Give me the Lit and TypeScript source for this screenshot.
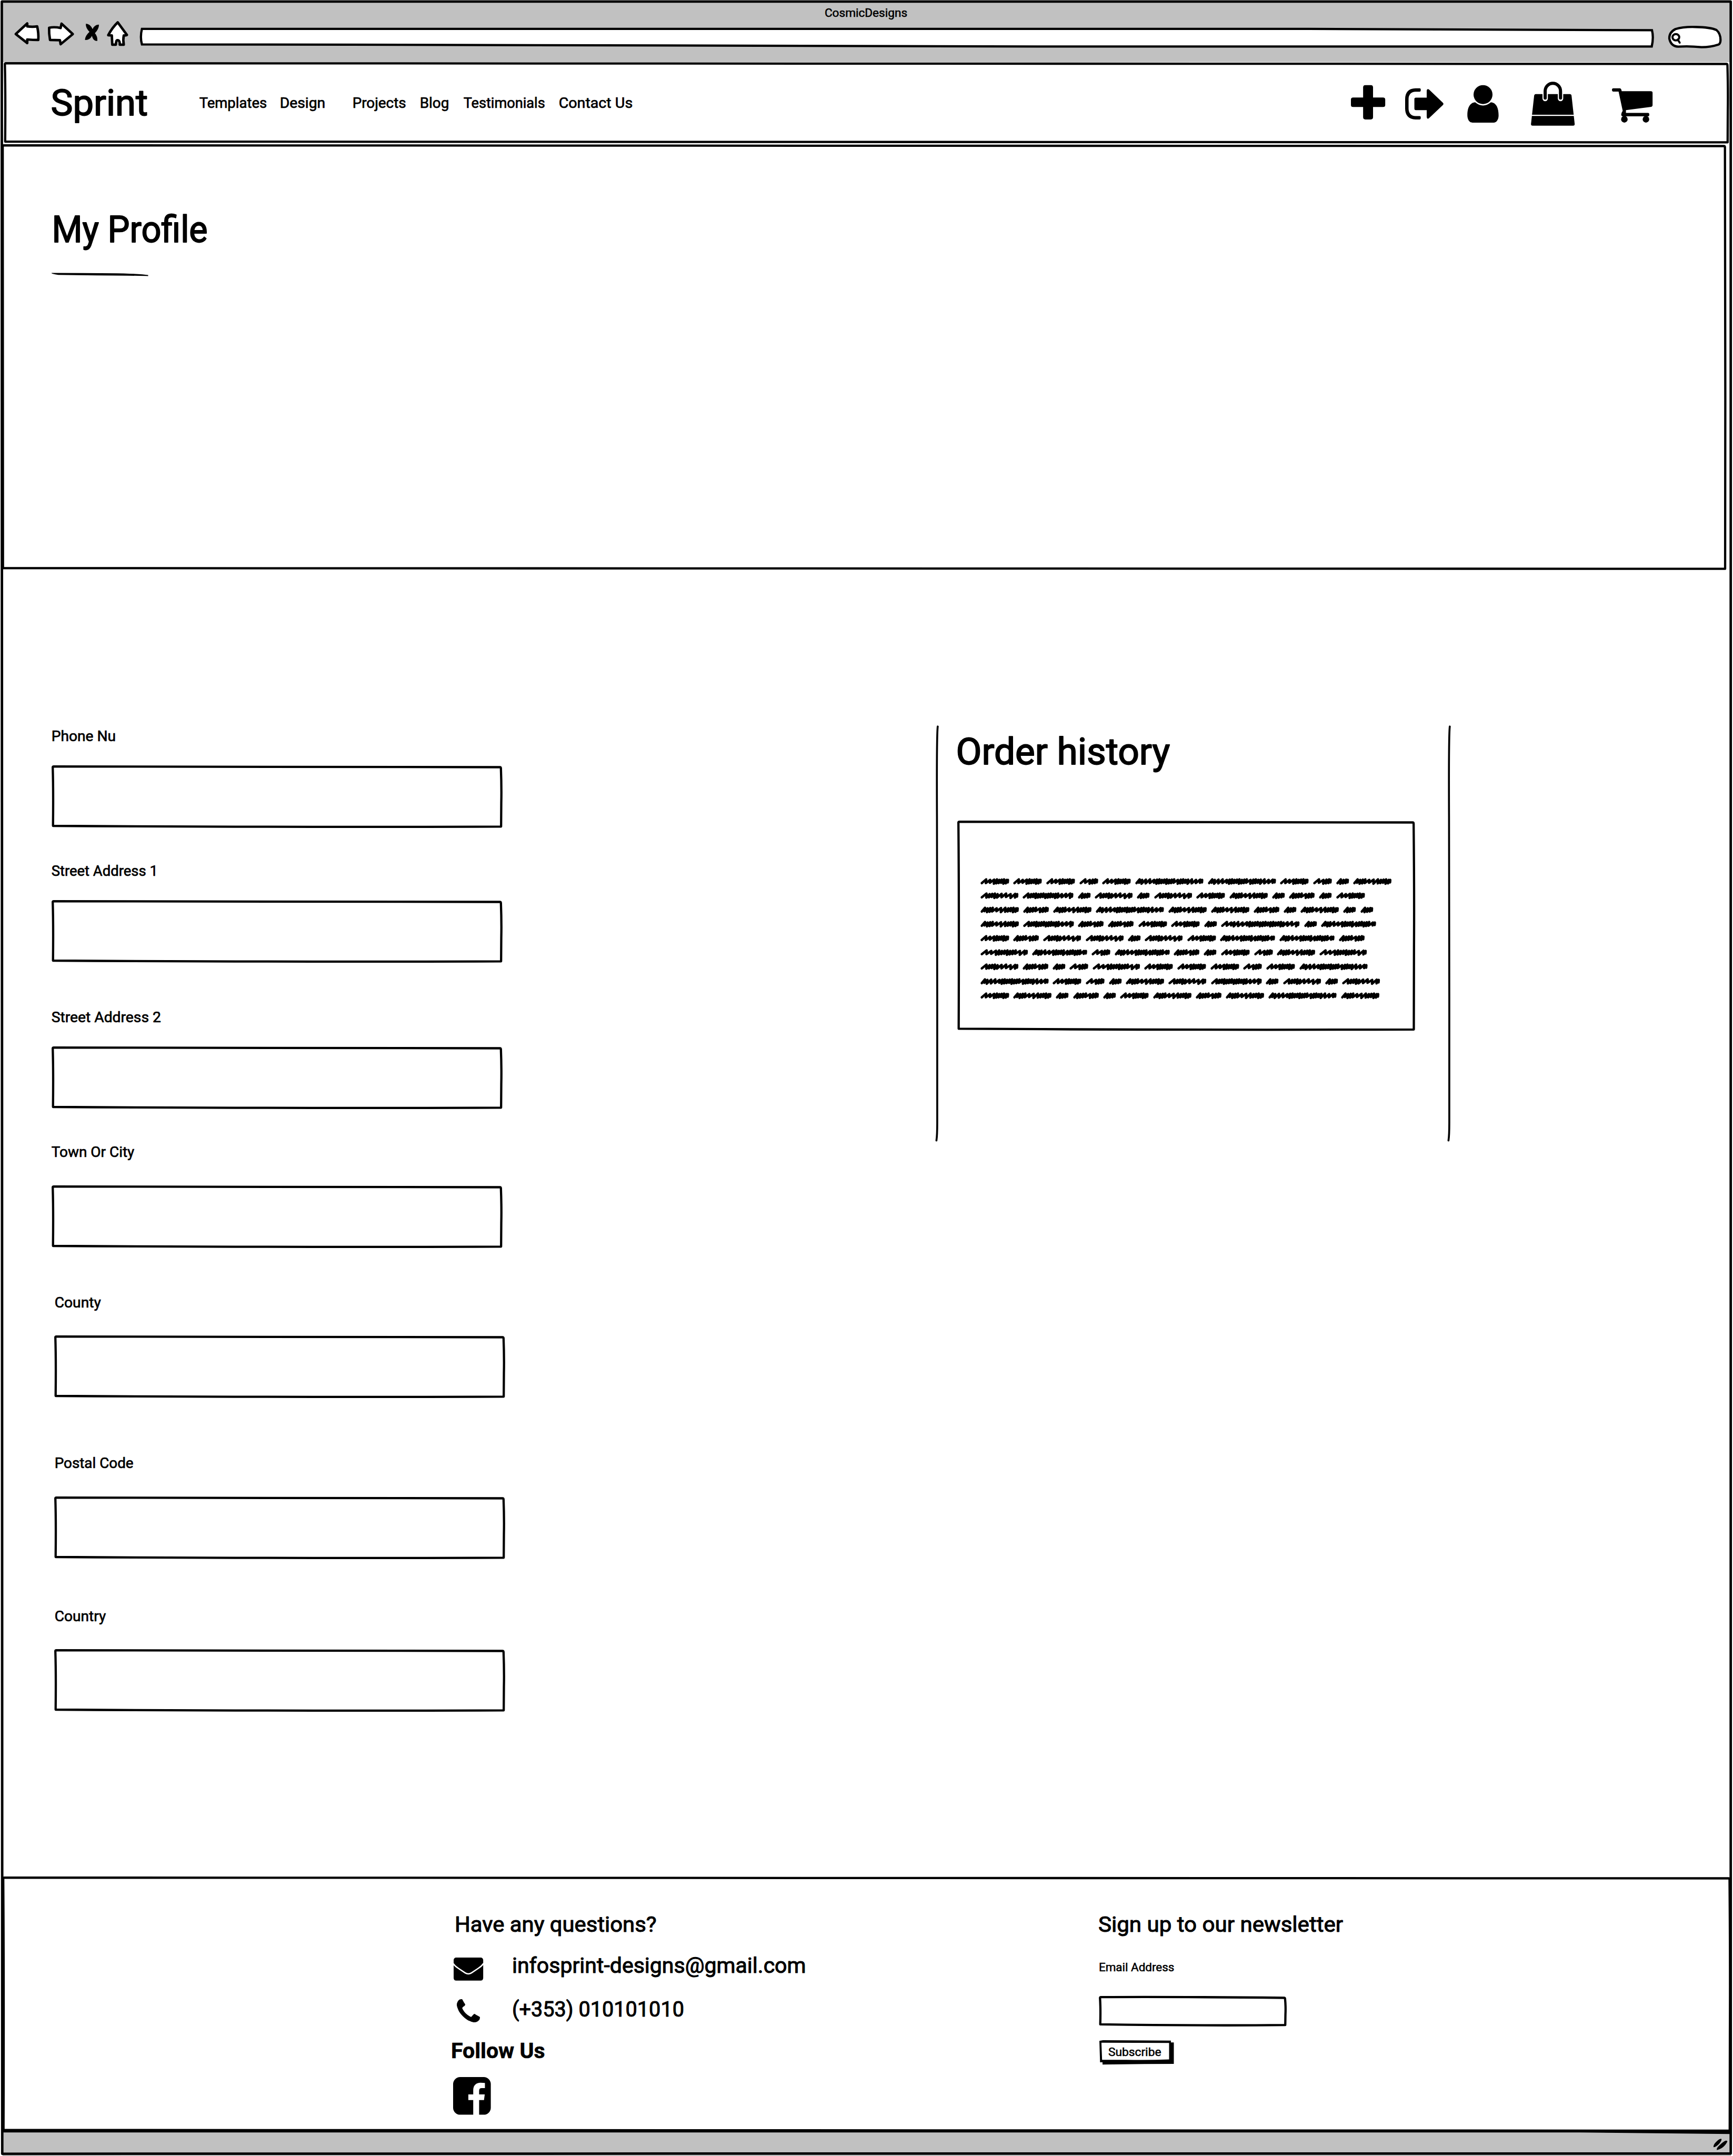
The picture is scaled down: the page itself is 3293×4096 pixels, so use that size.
import { LitElement, html, css, svg } from "lit";
import { customElement, property } from "lit/decorators.js";

/* ---------- drawing helpers ---------- */

/** Hand-drawn rectangle outline that covers a box of w × h. */
function frame(w: number, h: number, sw = 5, fill = "none") {
  const a = sw / 2;
  const d = `M${a} ${a + 1.5} Q${a + 0.3} ${a} ${a + 2} ${a}
    Q${w * 0.4} ${a - 1} ${w - a - 3} ${a + 1.6}
    Q${w - a - 1} ${a + 1.6} ${w - a - 0.8} ${a + 4}
    Q${w - a + 0.8} ${h * 0.35} ${w - a} ${h * 0.6}
    L${w - a - 0.4} ${h - a - 0.8}
    Q${w * 0.55} ${h - a + 1} ${a + 0.6} ${h - a - 2.4}
    Q${a + 1.6} ${h * 0.4} ${a} ${a + 1.5} Z`;
  return html`<svg class="frame" width=${w} height=${h} viewBox="0 0 ${w} ${h}">
    <path d=${d} fill=${fill} stroke="#000" stroke-width=${sw} stroke-linejoin="round"></path>
  </svg>`;
}

const icon = (x: number, y: number, w: number, h: number, body: unknown, cls = "") =>
  html`<svg class="icon ${cls}" width=${w} height=${h} viewBox="${x} ${y} ${w} ${h}">${body}</svg>`;

/* ---------- text fitted to a width, with rounded pen strokes ---------- */

@customElement("pen-text")
export class PenText extends LitElement {
  @property() text = "";
  @property({ type: Number }) size = 32;
  @property({ type: Number }) span = 100;
  @property({ type: Number }) weight = 400;
  @property({ type: Number }) pen = 0.022;

  static styles = css`
    :host { display: block; flex: none; }
    svg { display: block; overflow: visible; }
    text { font-family: Roboto, "Liberation Sans", sans-serif; fill: #000; stroke: #000; stroke-linejoin: round; }
  `;

  render() {
    const { text, size, span, weight, pen } = this;
    return html`<svg width=${span} height=${Math.round(size * 1.2)}>
      <text x=${-size * 0.05} y=${Math.round(size * 0.94)} font-size=${size} font-weight=${weight}
        stroke-width=${size * pen} textLength=${span + size * 0.09} lengthAdjust="spacingAndGlyphs">${text}</text>
    </svg>`;
  }
}

/* ---------- scribbled filler words ---------- */

const WORDS: Record<string, [number, string]> = {
  S: [28.7, "ddd"],
  T: [42, "lldd"],
  W: [57.5, "ddddldd"],
  M: [64, "lllddddd"],
  N: [84.5, "lddddllll"],
  P: [85.5, "ddddllldddd"],
  Q: [105.5, "llldddddddll"],
  R: [113, "lddddddddddddlll"],
  L: [122.5, "dddlllddddldddddl"],
  X: [151.5, "ddlllddddddddlddddlll"],
  Y: [174.5, "lldlllddddddddddddddlll"],
};

const LINES = [
  "MMMTMXXMTSP", "NRSNSNMPSWSM", "PWPXPPWSPSS", "PRWWMMSYSL", "MWNNSNMLLW",
  "QLTLWSMTPQ", "NWSTQMMMTMX", "XMTSPNRSNSN", "MPSWSMPWPXP",
];

function scribble(key: string) {
  const [w, steps] = WORDS[key];
  const unit = (c: string) => (c === "l" ? 9.5 : 5.6);
  const total = [...steps].reduce((n, c) => n + unit(c), 0);
  const k = (w - 11) / total;
  let x = 3;
  let d = `M${x} 12.5`;
  [...steps].forEach((c, i) => {
    const s = unit(c) * k;
    const up = 4.2 + ((i * 5) % 3) * 0.6;
    const down = 11.8 + ((i * 7 + key.charCodeAt(0)) % 4) * 0.7;
    d += `L${(x + s * 0.75 + 3).toFixed(1)} ${up}L${(x + s).toFixed(1)} ${down}`;
    x += s;
  });
  d += `L${w - 3} 5.5 L${w - 3.4} 11`;
  return html`<svg width=${w} height="17" viewBox="0 0 ${w} 17">
    <path d=${d} fill="none" stroke="#000" stroke-width="5.3" stroke-linejoin="round" stroke-linecap="round"></path>
  </svg>`;
}

/* ---------- data ---------- */

const NAV = [
  { text: "Templates", lead: 118, span: 147 },
  { text: "Design", lead: 32, span: 98 },
  { text: "Projects", lead: 62, span: 116 },
  { text: "Blog", lead: 34, span: 62 },
  { text: "Testimonials", lead: 35, span: 178 },
  { text: "Contact Us", lead: 33, span: 161 },
];

const FIELDS = [
  { text: "Phone Nu", span: 140, above: 0, gap: 46.5, left: 0 },
  { text: "Street Address 1", span: 233, above: 75, gap: 46, left: 0 },
  { text: "Street Address 2", span: 240, above: 101, gap: 46.5, left: 0 },
  { text: "Town Or City", span: 181, above: 76, gap: 55, left: 0 },
  { text: "County", span: 100, above: 101.5, gap: 53.5, left: 6 },
  { text: "Postal Code", span: 172, above: 125, gap: 54.5, left: 6 },
  { text: "Country", span: 111, above: 108, gap: 54, left: 6 },
];

const PLUS = svg`<path d="M3026 189H3038Q3043 189 3043 194V216.5H3065Q3070 216.5 3070 221V233Q3070 237.5 3065 237.5H3043V260Q3043 265 3038 265H3026Q3021 265 3021 260V237.5H2999Q2994 237.5 2994 233V221Q2994 216.5 2999 216.5H3021V194Q3021 189 3026 189Z"/>`;

const SIGN_OUT = svg`<path d="M3147 196H3138C3122 196 3114.8 206 3114.8 220V241C3114.8 255 3122 265 3138 265H3147Q3149.4 265 3149.4 262V260Q3149.4 257.5 3147 257.5H3138C3128 257.5 3122.4 251 3122.4 241V220C3122.4 210 3128 203.5 3138 203.5H3147Q3149.4 203.5 3149.4 201V198.5Q3149.4 196 3147 196Z"/>
  <path d="M3138.5 216.7H3162.6V201Q3163.5 195.5 3168 199L3198.5 228Q3200.8 230.5 3198.5 233L3168 262Q3163.5 265.5 3162.6 260V244.5H3138.5Q3135.3 244.5 3135.3 241V220Q3135.3 216.7 3138.5 216.7Z"/>`;

const USER = svg`<ellipse cx="3287.5" cy="210" rx="21" ry="21"/>
  <path d="M3270 227C3258 228 3252.6 240 3252.8 256C3253 266 3258 272 3264 272H3311C3317 272 3322 266 3322 256C3322 240 3317 228 3305 227Q3287.5 241.5 3270 227Z"/>`;

const BAG = svg`<path d="M3404 209H3480Q3483 209 3483.4 212L3490.4 275Q3490.5 278.7 3487 278.7H3397Q3393.4 278.7 3393.6 275L3400.6 212Q3401 209 3404 209Z"/>
  <path d="M3390 256H3494" stroke="#fff" stroke-width="2.8"/>
  <path d="M3425 218.5V202A17 17 0 0 1 3459 202V218.5" fill="none" stroke="#fff" stroke-width="12" stroke-linecap="round"/>
  <path d="M3425 217.5V202A17 17 0 0 1 3459 202V217.5" fill="none" stroke="#000" stroke-width="7" stroke-linecap="round"/>`;

const CART = svg`<path d="M3576 196H3590Q3594 196 3594.5 202.5H3659Q3663 202.5 3663 206V233Q3663 236.5 3660 237L3604 244.5V250.5H3653Q3655.7 250.5 3655.7 254.3Q3655.7 258 3653 258H3597Q3593.5 258 3593.5 254Q3594 250 3596.8 246L3587.7 203.2H3576Q3573 203 3573 199.5Q3573 196 3576 196Z"/>
  <circle cx="3600.5" cy="264.7" r="7.3"/><circle cx="3648.3" cy="264.7" r="7.3"/>`;

const MAIL = svg`<rect x="1005.5" y="4337.6" width="65.5" height="51.1" rx="5.5"/>
  <path d="M1004 4350.5Q1008 4356.5 1016 4361.5L1031 4371.5Q1038 4376 1045 4371.5L1060 4361.5Q1068 4356.5 1072 4350.5" fill="none" stroke="#fff" stroke-width="3"/>`;

const PHONE = svg`<path transform="translate(0 1408) scale(1 -1)" d="M1408 296q0 -27 -10 -70.5t-21 -68.5q-21 -50 -122 -106q-94 -51 -186 -51q-27 0 -53 3.5t-57.5 12.5t-47 14.5t-55.5 20.5t-49 18q-98 35 -175 83q-127 79 -264 216t-216 264q-48 77 -83 175q-3 9 -18 49t-20.5 55.5t-14.5 47t-12.5 57.5t-3.5 53q0 92 51 186q56 101 106 122q25 11 68.5 21t70.5 10q14 0 21 -3q18 -6 53 -76q11 -19 30 -54t35 -63.5t31 -53.5q3 -4 17.5 -25t21.5 -35.5t7 -28.5q0 -20 -28.5 -50t-62 -55t-62 -53t-28.5 -46q0 -9 5 -22.5t8.5 -20.5t14 -24t11.5 -19q76 -137 174 -235t235 -174q2 -1 19 -11.5t24 -14t20.5 -8.5t22.5 -5q18 0 46 28.5t53 62t55 62t50 28.5q14 0 28.5 -7t35.5 -21.5t25 -17.5q25 -15 53.5 -31t63.5 -35t54 -30q70 -35 76 -53q3 -7 3 -21z"/>`;

const FACEBOOK = svg`<path transform="translate(0 1408) scale(1 -1)" d="M1248 1408q119 0 203.5 -84.5t84.5 -203.5v-960q0 -119 -84.5 -203.5t-203.5 -84.5h-188v595h199l30 232h-229v148q0 56 23.5 84t91.5 28l122 1v207q-63 9 -178 9q-136 0 -217.5 -80t-81.5 -226v-171h-200v-232h200v-595h-532q-119 0 -203.5 84.5t-84.5 203.5v960q0 119 84.5 203.5t203.5 84.5h960z"/>`;

const BROWSER_KEYS = svg`<g fill="#fff" stroke="#000" stroke-width="5.5" stroke-linejoin="round">
    <path d="M34.5 75L60 51.5L60 58Q72 59.5 82 58Q85.5 73 84.5 88Q72 88 60 87L60 95Z"/>
    <path d="M108.5 61Q120 58.5 134 61.5L136 52L161 75L134 97.5L132.5 88.5L110.5 88Q108 74 108.5 61Z"/>
    <path d="M260.5 49L281 77Q277 78.5 274 78Q272 88 274 98.5H265Q265.5 92 263 89.5Q260 88 258 89.5Q256.5 93 256.5 98.5H248.5L247.5 78L239.5 77.5Q248 61 260.5 49Z"/>
  </g>
  <path d="M190 52Q199 52 205 64Q209 54 219 54Q219 64 210 73Q216 80 215.5 90Q206 91 203.5 79Q198 89 188 88Q188 79 198 70Q189 61 190 52Z"/>`;

const URL_BAR = svg`<path d="M314 63.5Q1600 62 2900 63.5L3661 66.5Q3665 82 3660.500 102.500L2300 102.500L780 98.500L314 98Q309.500 82 314 63.500Z" fill="#fff" stroke="#000" stroke-width="5"/>`;

const SEARCH_PILL = svg`<path d="M3718 103Q3702 102 3698.5 85Q3698 71 3712 64Q3730 58.5 3756 59.3Q3790 60 3803 66Q3812 74 3812 88Q3812 96 3808 98Q3790 104 3770 104Q3740 101 3718 103Z" fill="#fff" stroke="#000" stroke-width="5"/>
  <ellipse cx="3713" cy="82" rx="7.5" ry="7" fill="none" stroke="#000" stroke-width="4.5"/>
  <path d="M3717 87L3721.5 94" stroke="#000" stroke-width="4.5" stroke-linecap="round"/>`;

const GRIP = svg`<path d="M3797 4757Q3796 4752 3803 4745Q3810 4737.5 3814.5 4738.5Q3816 4742 3809 4750Q3802 4757 3797 4757Z"/>
  <path d="M3804.5 4763.5Q3802.5 4760 3810 4753Q3819 4744 3824.5 4742.5Q3829 4743 3827 4746Q3822 4755 3815 4759Q3809 4762.5 3804.5 4763.5Z"/>`;

/* ---------- page ---------- */

@customElement("app-root")
export class AppRoot extends LitElement {
  static styles = css`
    :host { display: block; width: 3293px; height: 4096px; overflow: hidden; background: #fff; }
    * { box-sizing: border-box; }
    svg { display: block; flex: none; overflow: visible; }
    .page { zoom: 0.85755; position: relative; width: 3840px; height: 4776px; display: flex; flex-direction: column; }
    .outline { position: absolute; inset: 0; pointer-events: none; }
    .frame { position: absolute; inset: 0; z-index: -1; }
    .bar, .hero, .box, .card, .footer, .mailbox, .btn { position: relative; isolation: isolate; }

    .chrome { height: 138px; margin: 0 5px 0 4px; background: #c1c1c1; padding-top: 13px; display: flex; flex-direction: column; align-items: center; flex: none; }
    .tools { width: 100%; margin-top: 1px; padding-left: 26px; display: flex; align-items: flex-start; }
    .url { margin-left: 19px; }
    .pill { margin-left: 29px; }

    .bar { height: 181px; width: 3823px; margin-left: 8.5px; padding: 42px 0 0 108.5px; display: flex; align-items: flex-start; flex: none; }
    .brand { margin-top: 1px; }
    .links { display: flex; margin-top: 29px; }
    .icons { display: flex; margin-left: 1592px; }
    .i-out { margin-left: 44.8px; }
    .i-user { margin-left: 52.7px; }
    .i-bag { margin-left: 71px; }
    .i-cart { margin-left: 82.5px; }

    .hero { height: 944px; width: 3822px; margin: 1px 0 0 4px; padding: 141px 0 0 114.5px; display: flex; flex-direction: column; align-items: flex-start; flex: none; }
    .rule { margin: 46px 0 0 -4.5px; }

    .main { flex: 1; display: flex; align-items: flex-start; }
    .form { width: 2073.5px; padding: 347.5px 0 0 114.5px; }
    .field { display: flex; flex-direction: column; }
    .name { margin-left: 1.5px; }
    .box { width: 999px; height: 139px; }
    .orders { display: flex; padding-top: 344px; }
    .panel { width: 1128px; padding: 10px 0 0 43px; }
    .card { width: 1014.5px; height: 466px; margin: 102.5px 0 0 -1.5px; padding: 126px 0 0 51px; display: flex; flex-direction: column; gap: 14.65px; }
    .line { display: flex; gap: 9.1px; height: 17px; }

    .footer { height: 566.5px; width: 3831px; margin-left: 4.5px; padding-top: 77px; display: flex; align-items: flex-start; flex: none; }
    .contact { margin-left: 996.5px; width: 1434.5px; }
    .ask { margin-left: 9px; }
    .row { display: flex; align-items: flex-start; margin-top: 33px; padding-left: 4px; }
    .row.tel { margin-top: 33.3px; padding-left: 10.7px; }
    .mail { margin: 11.6px 66px 0 0; }
    .phone { margin: 7px 74.3px 0 0; }
    .follow { margin: 33.7px 0 0 1px; }
    .fb { margin: 30.5px 0 0 2.6px; }
    .news { display: flex; flex-direction: column; align-items: flex-start; padding-left: 1px; }
    .mailbox { width: 416px; height: 67.7px; margin: 48.5px 0 0 -2px; }
    .email { margin-top: 50px; }
    .btn { width: 165px; height: 54px; margin: 30px 0 0 -1px; padding: 10.3px 0 0 22px; }

    .status { height: 52px; margin: 0 5px 0 6px; background: #c1c1c1; display: flex; justify-content: flex-end; padding: 14px 7px 0 0; flex: none; }
  `;

  private t(text: string, size: number, span: number, cls = "", weight = 400, pen = 0.026) {
    return html`<pen-text class=${cls} .text=${text} .size=${size} .span=${span} .weight=${weight} .pen=${pen}></pen-text>`;
  }

  private rail() {
    return html`<svg width="6" height="921" viewBox="0 0 6 921">
      <path d="M4.5 1Q2 20 2.8 200Q3.8 420 3.4 600V880Q3.4 908 1.6 919" fill="none" stroke="#000" stroke-width="4.3" stroke-linecap="round"></path>
    </svg>`;
  }

  render() {
    return html`<div class="page">
      <header class="chrome">
        ${this.t("CosmicDesigns", 26, 181)}
        <div class="tools">
          ${icon(30, 45, 260, 60, BROWSER_KEYS)}
          ${icon(309, 45, 3357, 60, URL_BAR, "url")}
          ${icon(3695, 45, 120, 62, SEARCH_PILL, "pill")}
        </div>
      </header>

      <nav class="bar">
        ${frame(3823, 181, 5, "#fff")}
        ${this.t("Sprint", 80, 208, "brand")}
        <div class="links">
          ${NAV.map((n) => html`<div style="padding-left:${n.lead}px">${this.t(n.text, 32, n.span)}</div>`)}
        </div>
        <div class="icons">
          ${icon(2994, 180, 76, 100, PLUS)}
          ${icon(3114.8, 180, 85, 100, SIGN_OUT, "i-out")}
          ${icon(3252.5, 180, 69.5, 100, USER, "i-user")}
          ${icon(3393.4, 180, 97, 100, BAG, "i-bag")}
          ${icon(3573, 180, 90, 100, CART, "i-cart")}
        </div>
      </nav>

      <section class="hero">
        ${frame(3822, 944, 5)}
        ${this.t("My Profile", 81, 338)}
        <svg class="rule" width="214" height="8" viewBox="0 0 214 8">
          <path d="M0 .5Q100 .6 160 1.7Q200 3 214 5.3V7.5Q190 6.6 100 6.2L15 5Q3 3.5 0 1.5Z"></path>
        </svg>
      </section>

      <main class="main">
        <form class="form">
          ${FIELDS.map(
            (f) => html`<div class="field" style="margin-top:${f.above}px;padding-left:${f.left}px;row-gap:${f.gap}px">
              ${this.t(f.text, 32, f.span, "name")}
              <div class="box">${frame(999, 139, 5)}</div>
            </div>`
          )}
        </form>
        <section class="orders">
          ${this.rail()}
          <div class="panel">
            ${this.t("Order history", 81, 467)}
            <div class="card">
              ${frame(1014.5, 466, 5)}
              ${LINES.map((l) => html`<div class="line">${[...l].map(scribble)}</div>`)}
            </div>
          </div>
          ${this.rail()}
        </section>
      </main>

      <footer class="footer">
        ${frame(3831, 566.5, 5)}
        <div class="contact">
          ${this.t("Have any questions?", 48, 443, "ask")}
          <div class="row">
            ${icon(1005.5, 4337.6, 66, 51.1, MAIL, "mail")}
            ${this.t("infosprint-designs@gmail.com", 48, 647)}
          </div>
          <div class="row tel">
            <svg class="phone" width="51.3" height="51.3" viewBox="0 0 1408 1408">${PHONE}</svg>
            ${this.t("(+353) 010101010", 48, 377)}
          </div>
          ${this.t("Follow Us", 48, 204, "follow", 700, 0.015)}
          <svg class="fb" width="83.5" height="83.5" viewBox="0 0 1536 1536">${FACEBOOK}</svg>
        </div>
        <div class="news">
          ${this.t("Sign up to our newsletter", 48, 538)}
          ${this.t("Email Address", 26, 165, "email")}
          <div class="mailbox">${frame(416, 67.7, 5)}</div>
          <div class="btn">
            <svg class="frame" width="165" height="54" viewBox="0 0 165 54">
              <path d="M0 1.5L8 0L158.5 1V5H165V52.5L100 52.7L7 54V49H1.5Z"></path>
              <path d="M4.5 5.5L154.5 6V42.5Q110 44.5 60 43.5H6Z" fill="#fff"></path>
            </svg>
            ${this.t("Subscribe", 26, 115)}
          </div>
        </div>
      </footer>

      <div class="status">${icon(3797, 4738, 31, 26, GRIP)}</div>

      <svg class="outline" width="3840" height="4776" viewBox="0 0 3840 4776" fill="none" stroke="#000" stroke-width="5.5">
        <path d="M4 3.5H3835V4771H2000Q900 4771.5 5 4771.5Q3.5 4000 4 3.5Z" stroke-linejoin="round"></path>
        <path d="M6 4721.5H3500L3835 4725"></path>
      </svg>
    </div>`;
  }
}
